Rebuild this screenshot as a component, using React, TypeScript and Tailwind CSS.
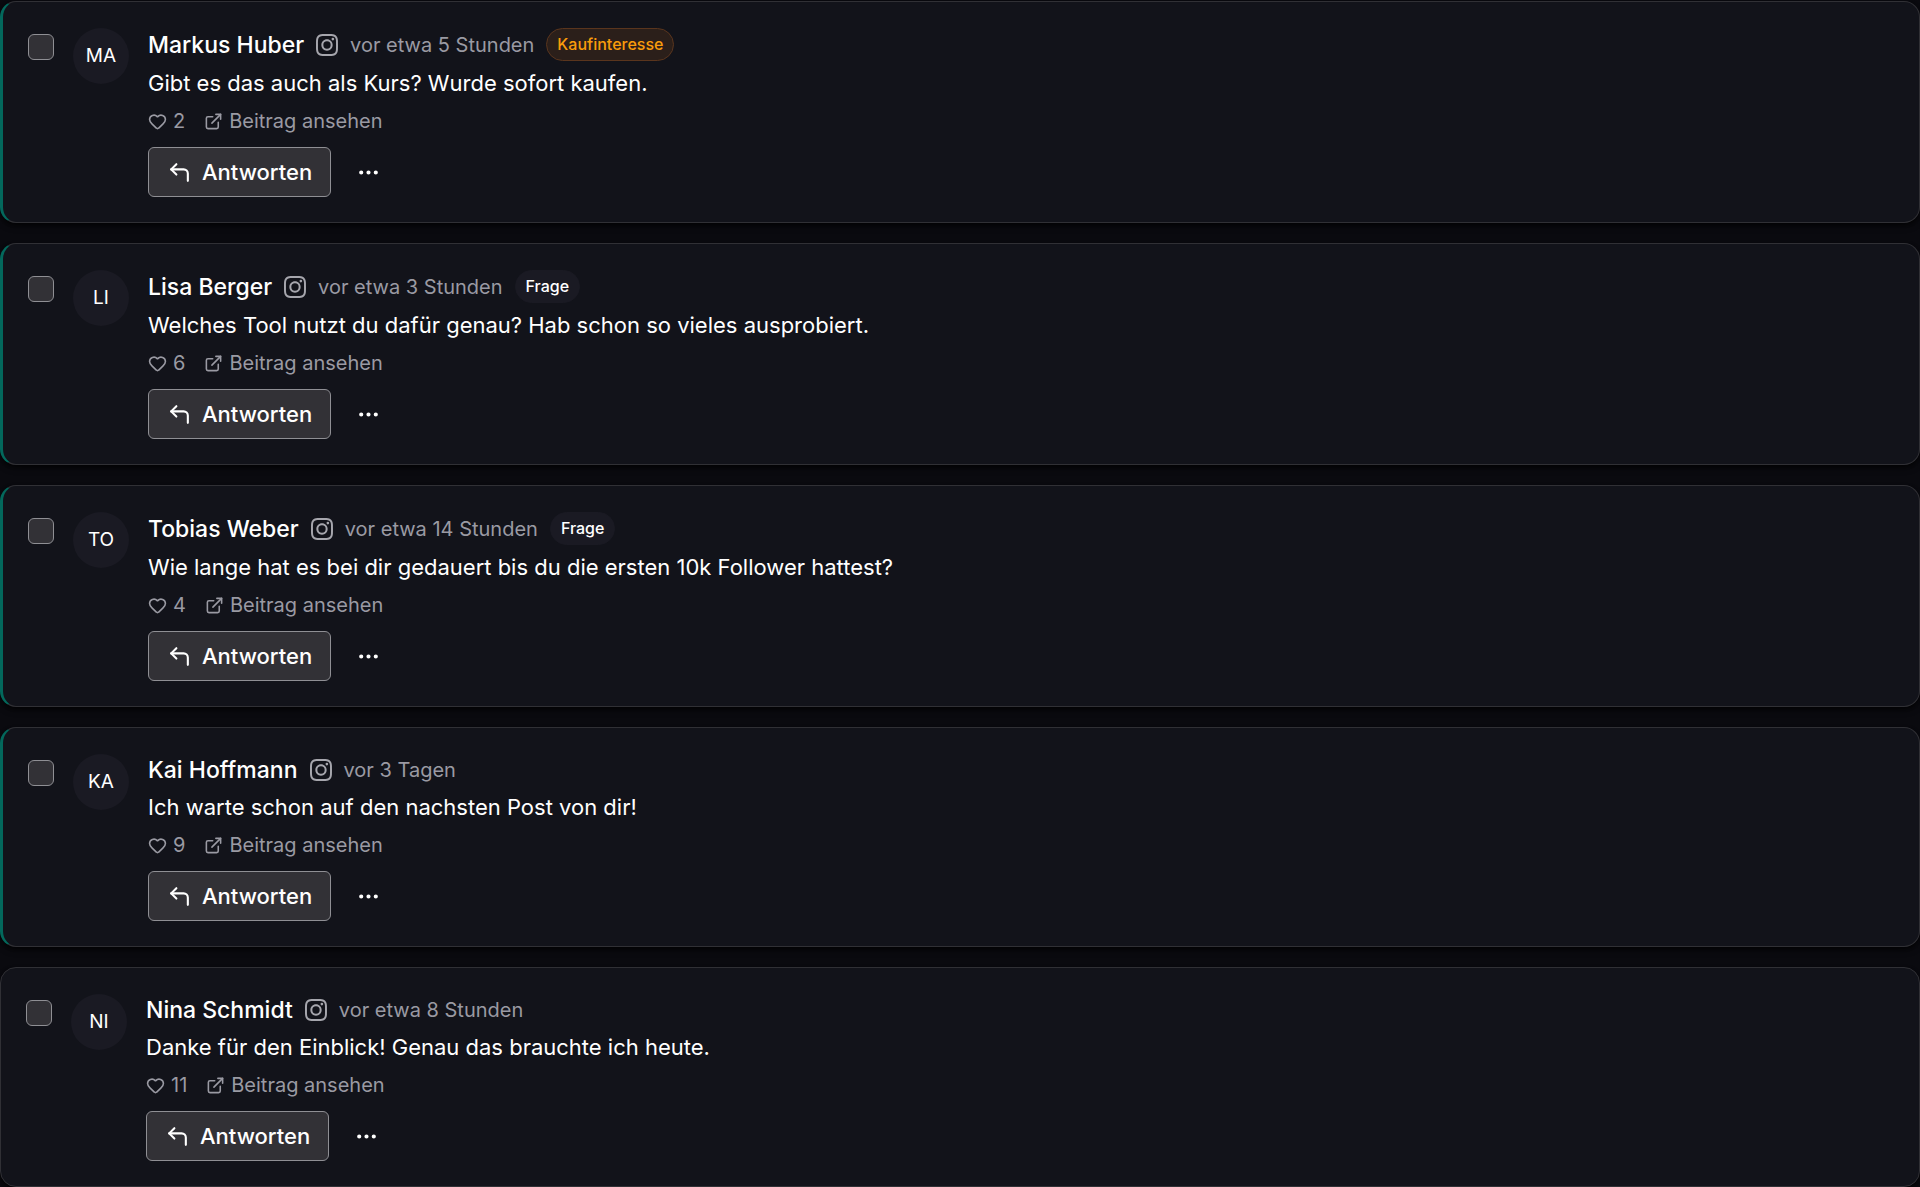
import { useId } from "react";
import { CornerUpLeft, Ellipsis, ExternalLink, Heart } from "lucide-react";
import { SiInstagram } from "react-icons/si";

type Comment = {
  name: string;
  time: string;
  text: string;
  likes: number;
  unread: boolean;
  badge?: { label: string; tone: "intent" | "question" };
};

const comments: Comment[] = [
  {
    name: "Markus Huber",
    time: "vor etwa 5 Stunden",
    text: "Gibt es das auch als Kurs? Wurde sofort kaufen.",
    likes: 2,
    unread: true,
    badge: { label: "Kaufinteresse", tone: "intent" },
  },
  {
    name: "Lisa Berger",
    time: "vor etwa 3 Stunden",
    text: "Welches Tool nutzt du dafür genau? Hab schon so vieles ausprobiert.",
    likes: 6,
    unread: true,
    badge: { label: "Frage", tone: "question" },
  },
  {
    name: "Tobias Weber",
    time: "vor etwa 14 Stunden",
    text: "Wie lange hat es bei dir gedauert bis du die ersten 10k Follower hattest?",
    likes: 4,
    unread: true,
    badge: { label: "Frage", tone: "question" },
  },
  {
    name: "Kai Hoffmann",
    time: "vor 3 Tagen",
    text: "Ich warte schon auf den nachsten Post von dir!",
    likes: 9,
    unread: true,
  },
  {
    name: "Nina Schmidt",
    time: "vor etwa 8 Stunden",
    text: "Danke für den Einblick! Genau das brauchte ich heute.",
    likes: 11,
    unread: false,
  },
];

function CommentCard({ comment }: { comment: Comment }) {
  const id = useId();
  const { name, time, text, likes, unread, badge } = comment;
  return (
    <article
      className={`flex items-start gap-[19px] rounded-2xl border border-[#303035] bg-[#12131a] px-[25px] pt-[26px] pb-[25px] shadow-md shadow-black/60 ${
        unread ? "border-l-3 border-l-[#03685c]" : ""
      }`}
    >
      <input
        id={id}
        type="checkbox"
        aria-label={`Kommentar von ${name} auswählen`}
        className="mt-1.5 size-[26px] shrink-0 appearance-none rounded-md border border-[#8f8f94] bg-[#323136] checked:bg-[#03685c]"
      />
      <span className="flex size-14 shrink-0 items-center justify-center rounded-full bg-[#1a1a23] text-[19px]">
        {name.slice(0, 2).toUpperCase()}
      </span>
      <div className="min-w-0 flex-1">
        <div className="flex min-h-[31px] items-center gap-3">
          <label htmlFor={id} className="text-[23px] leading-7 font-medium">
            {name}
          </label>
          <SiInstagram className="size-[22px] text-[#a6a6ad]" />
          <time className="text-xl leading-7 text-[#9a9aa3]">{time}</time>
          {badge && (
            <span
              className={`rounded-full border px-[10px] text-base leading-[31px] font-medium ${
                badge.tone === "intent"
                  ? "border-[#5a351d] bg-[#2b1f1a] text-[#f99c0b]"
                  : "border-[#1a1a23] bg-[#1a1a23] text-white"
              }`}
            >
              {badge.label}
            </span>
          )}
        </div>
        <p className="mt-1.5 text-[22px] leading-8">{text}</p>
        <div className="mt-2 flex items-center gap-[19px] text-xl leading-7 text-[#9a9aa3]">
          <span className="flex items-center gap-1.5">
            <Heart className="size-[19px]" />
            {likes}
          </span>
          <a href="#beitrag" className="flex items-center gap-1.5">
            <ExternalLink className="size-[19px]" />
            Beitrag ansehen
          </a>
        </div>
        <div className="mt-3 flex items-center gap-3">
          <button
            type="button"
            className="flex h-[50px] items-center gap-2.5 rounded-md border border-[#8f8f94] bg-[#323136] px-[18px] text-[22px] font-medium"
          >
            <CornerUpLeft className="size-[25px]" />
            Antworten
          </button>
          <button
            type="button"
            aria-label="Weitere Aktionen"
            className="flex size-[50px] items-center justify-center rounded-md"
          >
            <Ellipsis className="size-[25px]" />
          </button>
        </div>
      </div>
    </article>
  );
}

export default function App() {
  return (
    <main className="flex min-h-screen flex-col gap-5 bg-[#0a0a0f] pt-px font-['Inter',sans-serif] text-white">
      {comments.map((comment) => (
        <CommentCard key={comment.name} comment={comment} />
      ))}
    </main>
  );
}
